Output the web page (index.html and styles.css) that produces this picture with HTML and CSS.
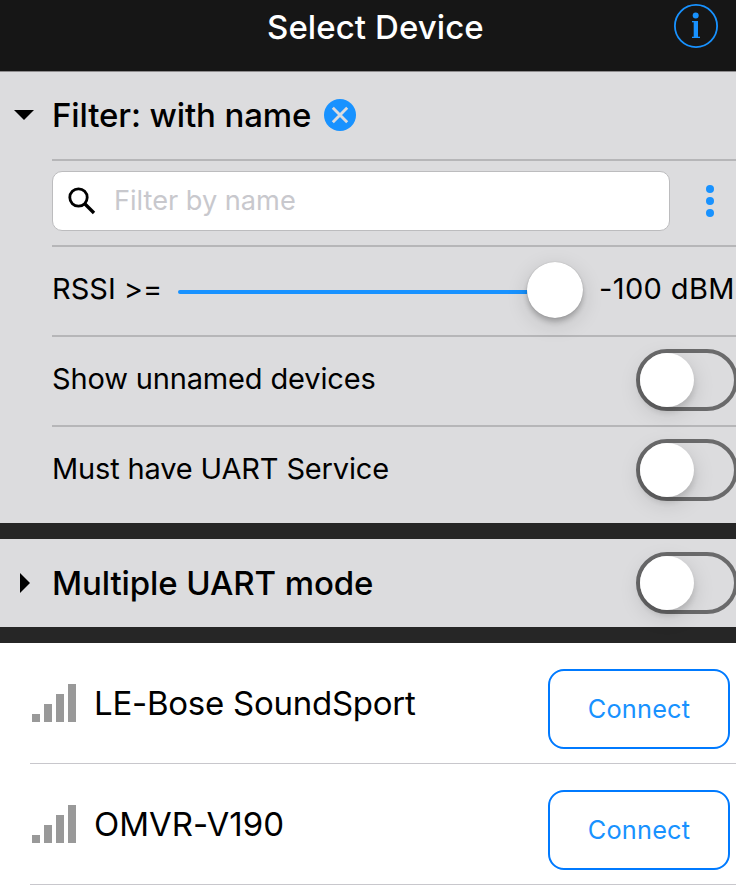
FILE: index.html
```
<!DOCTYPE html>
<html lang="en">
<head>
<meta charset="utf-8">
<title>Select Device</title>
<link rel="stylesheet" href="styles.css">
</head>
<body>
<header class="navbar">
  <h1 class="navbar-title">Select Device</h1>
  <svg class="info-icon" viewBox="0 0 44 44" aria-label="Info">
    <circle cx="22" cy="22" r="21.1" fill="none" stroke="currentColor" stroke-width="1.8"/>
    <circle cx="21.7" cy="11.6" r="3" fill="currentColor"/>
    <rect x="19.7" y="17" width="4.3" height="17" fill="currentColor"/>
    <rect x="18" y="17" width="3" height="1.3" fill="currentColor"/>
    <rect x="18" y="32.7" width="8" height="1.3" fill="currentColor"/>
  </svg>
</header>

<section class="panel filter">
  <div class="panel-head">
    <svg class="arrow" viewBox="0 0 20 20"><path d="M0 5H20L10 15Z"/></svg>
    <h2 class="panel-title filter-title">Filter: with name</h2>
    <svg class="clear-icon" viewBox="0 0 32 32" aria-label="Clear filter">
      <circle cx="16" cy="16" r="16" fill="#1892ff"/>
      <path d="M8.8 8.8L23.2 23.2M23.2 8.8L8.8 23.2" stroke="#dcdcde" stroke-width="2.9"/>
    </svg>
  </div>
  <div class="row search-row">
    <label class="search">
      <svg class="search-icon" viewBox="0 0 28 28">
        <circle cx="10.5" cy="10.5" r="8.7" fill="none" stroke="#000" stroke-width="2.8"/>
        <path d="M16.5 16.5L26 26" stroke="#000" stroke-width="3.4"/>
      </svg>
      <span class="placeholder">Filter by name</span>
    </label>
    <svg class="more-icon" viewBox="0 0 8 32" aria-label="More">
      <circle cx="4" cy="4" r="4"/><circle cx="4" cy="16" r="4"/><circle cx="4" cy="28" r="4"/>
    </svg>
  </div>
  <div class="row rssi-row">
    <span class="rssi-label">RSSI &gt;=</span>
    <div class="slider"><div class="slider-track"></div><div class="slider-knob"></div></div>
    <span class="rssi-value">-100 dBM</span>
  </div>
  <div class="row toggle-row">
    <span>Show unnamed devices</span>
    <div class="toggle"><div class="toggle-knob"></div></div>
  </div>
  <div class="row toggle-row">
    <span>Must have UART Service</span>
    <div class="toggle"><div class="toggle-knob"></div></div>
  </div>
</section>

<section class="panel multi">
  <svg class="arrow" viewBox="0 0 20 20"><path d="M6 0V20L16 10Z"/></svg>
  <h2 class="panel-title multi-title">Multiple UART mode</h2>
  <div class="toggle"><div class="toggle-knob"></div></div>
</section>

<main class="devices">
  <div class="device">
    <div class="signal"><i class="bar b1"></i><i class="bar b2"></i><i class="bar b3"></i><i class="bar b4"></i></div>
    <span class="device-name bose">LE-Bose SoundSport</span>
    <button class="connect">Connect</button>
  </div>
  <div class="device">
    <div class="signal"><i class="bar b1"></i><i class="bar b2"></i><i class="bar b3"></i><i class="bar b4"></i></div>
    <span class="device-name">OMVR-V190</span>
    <button class="connect">Connect</button>
  </div>
</main>
</body>
</html>
```
FILE: styles.css
```
* { box-sizing: border-box; }
body {
  margin: 0;
  width: 736px;
  height: 892px;
  overflow: hidden;
  background: #fff;
  color: #000;
  font-family: Inter, "Liberation Sans", sans-serif;
  font-feature-settings: "calt" 0;
  white-space: nowrap;
}
svg { display: block; flex: none; }

.navbar {
  display: grid;
  grid-template-columns: 1fr 216px 1fr;
  height: 72px;
  padding: 4px 18px 0 32px;
  background: #161616;
  border-bottom: 1px solid #8e8c8e;
}
.navbar-title {
  grid-column: 2;
  margin: 0;
  color: #fff;
  font-size: 33px;
  font-weight: 500;
  line-height: 46px;
  letter-spacing: 0.08px;
}
.info-icon { width: 44px; height: 44px; color: #1892ff; justify-self: end; }

.panel { background: #dcdcde; border-bottom: 16px solid #262626; }
.filter { height: 467px; }
.panel-head { display: flex; align-items: center; height: 87px; padding: 0 0 1px 14px; }
.arrow { width: 20px; height: 20px; }
.panel-title { margin: 0 0 0 18px; font-size: 33px; font-weight: 500; line-height: 46px; }
.filter-title { width: 260px; letter-spacing: -0.12px; }
.clear-icon { width: 32px; height: 32px; margin-left: 12px; }

.row {
  display: flex;
  align-items: center;
  margin-left: 52px;
  height: 90px;
  border-top: 2px solid #b6b6b8;
  font-size: 29px;
  line-height: 40px;
}
.search-row { height: 86px; align-items: flex-start; padding-top: 10px; }
.search {
  display: flex;
  align-items: center;
  width: 618px;
  height: 60px;
  padding-left: 15px;
  background: #fff;
  border: 1px solid #bcbcbe;
  border-radius: 10px;
}
.search-icon { width: 28px; height: 28px; }
.placeholder { margin-left: 18px; font-size: 27.2px; letter-spacing: -0.02px; color: #c8c8cd; }
.more-icon { width: 8px; height: 32px; margin: 14px 0 0 36px; fill: #1892ff; }

.rssi-row { padding-bottom: 4px; }
.rssi-label { width: 126px; letter-spacing: 0; }
.rssi-value { margin-left: 16px; letter-spacing: 0.38px; }
.slider { display: flex; align-items: center; width: 405px; flex: none; margin-top: 2px; }
.slider-track { width: 349px; height: 4px; margin-top: 4px; border-radius: 2px 0 0 2px; background: #1892ff; }
.slider-knob {
  width: 56px;
  height: 56px;
  border-radius: 50%;
  background: #fff;
  box-shadow: 0 0 1px rgba(0,0,0,.3), 0 4px 5px rgba(0,0,0,.2), 0 6px 22px rgba(0,0,0,.14);
}

.toggle-row { padding-bottom: 4px; letter-spacing: -0.15px; }
.toggle {
  flex: none;
  width: 102px;
  height: 62px;
  margin-left: auto;
  margin-right: -2px;
  border: 4px solid #6a6a6b;
  border-radius: 31px;
}
.toggle-row .toggle { margin-top: 2px; }
.toggle-knob {
  width: 54px;
  height: 54px;
  border-radius: 50%;
  background: #fff;
  box-shadow: 0 5px 6px rgba(0,0,0,.12), 0 6px 22px rgba(0,0,0,.13);
}

.multi { display: flex; align-items: center; height: 104px; padding-left: 14px; }
.multi-title { letter-spacing: -0.1px; }

.device { display: flex; height: 121px; margin-left: 30px; padding: 0 6px 0 2px; border-bottom: 1px solid #c8c7cc; }
.signal { display: flex; align-items: flex-end; gap: 4px; height: 79px; }
.bar { width: 8px; background: #999; }
.b1 { height: 8px; }
.b2 { height: 18px; }
.b3 { height: 28px; }
.b4 { height: 38px; }
.device-name { margin-left: 18px; padding-top: 37px; font-size: 33px; line-height: 46px; letter-spacing: 0; }
.bose { letter-spacing: -0.25px; }
.connect {
  width: 182px;
  height: 80px;
  margin: 26px 0 0 auto;
  padding: 0;
  border: 2px solid #007aff;
  border-radius: 16px;
  background: #fff;
  color: #1892ff;
  font: 400 25.3px/36px Inter, "Liberation Sans", sans-serif;
  letter-spacing: 0.21px;
}
```
